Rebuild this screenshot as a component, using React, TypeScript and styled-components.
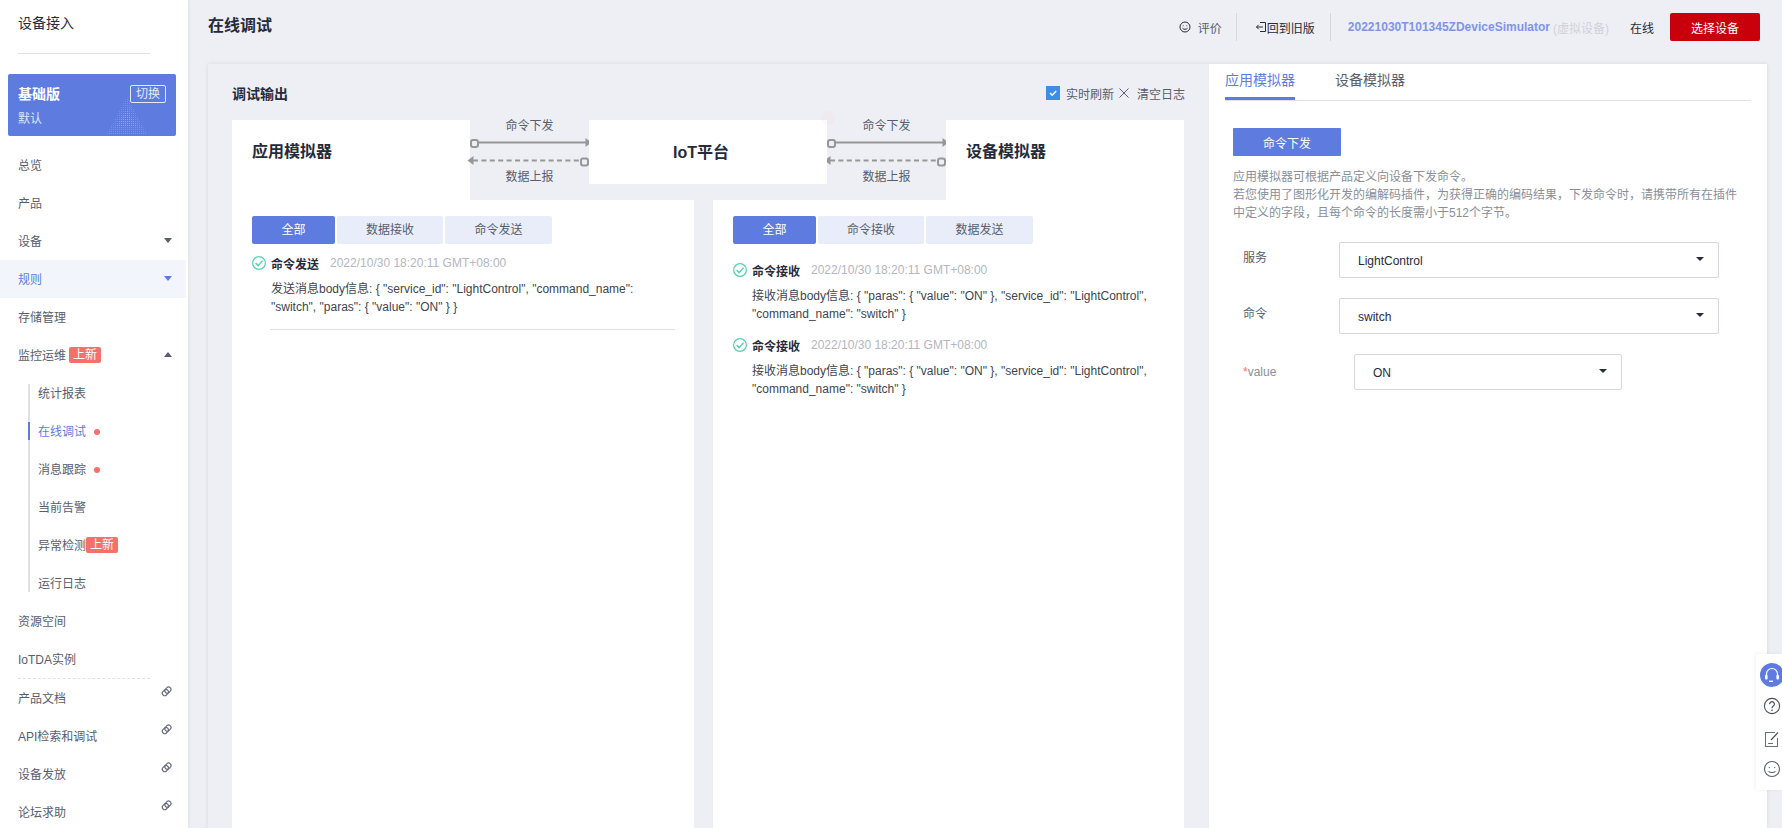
import React from "react";
import styled, { createGlobalStyle } from "styled-components";

const Global = createGlobalStyle`
  html, body { margin: 0; padding: 0; height: 100%; overflow: hidden; background: #eeeff5; }
  body { font-family: "Liberation Sans", "Noto Sans CJK SC", sans-serif; font-size: 12px; color: #252b3a; }
  * { box-sizing: border-box; }
`;

const Page = styled.div`
  position: relative;
  display: flex;
  width: 1782px;
  height: 828px;
  overflow: hidden;
  background: #eeeff5;
`;

/* ---------- sidebar ---------- */
const Sidebar = styled.aside`
  flex: 0 0 188px;
  height: 828px;
  overflow: hidden;
  background: #fff;
  box-shadow: 1px 0 3px rgba(0, 0, 0, 0.06);
`;
const SideTitle = styled.div`
  height: 46px;
  padding-left: 18px;
  line-height: 46px;
  font-size: 14px;
  color: #252b3a;
`;
const SideRule = styled.div`
  width: 132px;
  height: 1px;
  margin: 7px 0 20px 18px;
  background: #dfe1e6;
`;
const PlanCard = styled.div`
  position: relative;
  height: 62px;
  margin: 0 12px 10px 8px;
  padding: 11px 10px 0;
  border-radius: 2px;
  background: #5e7ce0;
  color: #fff;
  overflow: hidden;
`;
const PlanRow = styled.div`
  display: flex;
  align-items: center;
  justify-content: space-between;
  height: 18px;
`;
const PlanName = styled.span`
  margin-top: -2px;
  font-size: 14px;
  font-weight: 700;
`;
const PlanSwitch = styled.span`
  position: relative;
  z-index: 1;
  width: 36px;
  height: 18px;
  border: 1px solid #e3e8fa;
  border-radius: 2px;
  line-height: 17px;
  text-align: center;
  font-size: 12px;
  color: #e6eafb;
`;
const PlanSub = styled.div`
  margin-top: 7px;
  line-height: 18px;
  font-size: 12px;
  color: #dfe5f9;
`;
const PlanArt = styled.svg`
  position: absolute;
  left: 97px;
  top: 23px;
`;
const MenuItem = styled.div<{ $active?: boolean }>`
  display: flex;
  align-items: center;
  height: 38px;
  width: 186px;
  padding: 0 0 2px 18px;
  font-size: 12px;
  color: ${(p) => (p.$active ? "#5e7ce0" : "#575d6c")};
  background: ${(p) => (p.$active ? "#f2f5fc" : "transparent")};
`;
const Caret = styled.span<{ $up?: boolean; $color?: string }>`
  margin-left: auto;
  margin-right: 14px;
  width: 0;
  height: 0;
  border-left: 4px solid transparent;
  border-right: 4px solid transparent;
  ${(p) =>
    p.$up
      ? `border-bottom: 5px solid ${p.$color || "#575d6c"};`
      : `border-top: 5px solid ${p.$color || "#575d6c"};`}
`;
const NewBadge = styled.span<{ $flush?: boolean }>`
  width: 32px;
  height: 16px;
  margin: 2px 0 0 ${(p) => (p.$flush ? "0" : "3px")};
  border-radius: 2px;
  background: #f66f6a;
  color: #fff;
  text-align: center;
  line-height: 16px;
  font-size: 12px;
`;
const SubMenu = styled.div`
  position: relative;
  &::before {
    content: "";
    position: absolute;
    left: 28px;
    top: 10px;
    bottom: 10px;
    width: 2px;
    background: #dfe1e6;
  }
`;
const SubItem = styled.div<{ $active?: boolean }>`
  position: relative;
  display: flex;
  align-items: center;
  height: 38px;
  padding: 0 0 2px 38px;
  font-size: 12px;
  color: ${(p) => (p.$active ? "#5e7ce0" : "#575d6c")};
  ${(p) =>
    p.$active
      ? `&::before { content: ""; position: absolute; left: 28px; top: 10px; height: 18px; width: 2px; background: #5e7ce0; }`
      : ""}
`;
const Dot = styled.span`
  width: 6px;
  height: 6px;
  margin: 3px 0 0 8px;
  border-radius: 50%;
  background: #f66f6a;
`;
const DashRule = styled.div`
  width: 132px;
  margin: 0 0 0 18px;
  border-top: 1px dashed #dfe1e6;
  height: 0;
`;
const LinkIcon = styled.svg`
  margin-left: auto;
  margin-right: 14px;
  margin-top: -10px;
`;

/* ---------- main ---------- */
const Main = styled.main`
  flex: 1;
  min-width: 0;
  padding-left: 20px;
  display: flex;
  flex-direction: column;
`;
const TopBar = styled.header`
  flex: 0 0 64px;
  display: flex;
  align-items: flex-start;
  padding-right: 22px;
`;
const PageTitle = styled.h1`
  margin: 14px auto 0 0;
  font-size: 16px;
  line-height: 24px;
  font-weight: 700;
  color: #252b3a;
`;
const TopGroup = styled.div`
  display: flex;
  align-items: center;
  height: 28px;
  margin-top: 13px;
`;
const TopLink = styled.span`
  display: flex;
  align-items: center;
  font-size: 12px;
  color: #575d6c;
`;
const TopBack = styled(TopLink)`
  color: #252b3a;
`;
const Sep = styled.span<{ $l: number; $r: number }>`
  width: 1px;
  height: 28px;
  background: #d5d7de;
  margin: 0 ${(p) => p.$r}px 0 ${(p) => p.$l}px;
`;
const DeviceName = styled.span`
  font-weight: 700;
  font-size: 12px;
  color: #7f93ee;
`;
const DeviceKind = styled.span`
  margin-left: 3px;
  color: #d0d2d9;
`;
const OnlineText = styled.span`
  margin-left: 21px;
  color: #252b3a;
`;
const DangerButton = styled.button`
  width: 90px;
  height: 28px;
  margin-left: 16px;
  border: 0;
  border-radius: 2px;
  background: #c7000b;
  color: #fff;
  font: inherit;
  font-size: 12px;
`;
const Content = styled.div`
  flex: 1;
  display: flex;
  min-height: 0;
  margin-right: 15px;
  box-shadow: 0 0 4px rgba(0, 0, 0, 0.1);
`;
const DebugPanel = styled.section`
  flex: 0 0 1001px;
  padding: 0 24px;
  display: flex;
  flex-direction: column;
`;
const DebugHead = styled.div`
  flex: 0 0 56px;
  display: flex;
  align-items: center;
  padding-top: 2px;
  justify-content: space-between;
`;
const DebugTitle = styled.h2`
  margin: 0;
  font-size: 14px;
  font-weight: 700;
  color: #252b3a;
`;
const DebugTools = styled.div`
  display: flex;
  align-items: center;
  color: #575d6c;
`;
const CheckBox = styled.span`
  display: flex;
  align-items: center;
  justify-content: center;
  width: 14px;
  height: 14px;
  background: #3f8ee6;
  margin-right: 6px;
`;
const ClearIcon = styled.svg`
  margin: 0 8px 0 5px;
`;
const FlowRow = styled.div`
  flex: 0 0 80px;
  display: grid;
  grid-template-columns: 238px 119px 238px 119px 238px;
  align-items: start;
`;
const EndBox = styled.div`
  height: 80px;
  background: #fff;
  padding: 18px 0 0 20px;
  font-size: 16px;
  line-height: 28px;
  font-weight: 700;
  color: #252b3a;
`;
const CoreBox = styled.div`
  position: relative;
  height: 64px;
  padding-right: 14px;
  background: #fff;
  text-align: center;
  line-height: 66px;
  font-size: 16px;
  font-weight: 700;
  color: #252b3a;
`;
const GhostBadge = styled.span`
  position: absolute;
  right: -8px;
  top: -9px;
  width: 14px;
  height: 14px;
  border-radius: 50%;
  background: rgba(246, 111, 106, 0.03);
`;
const Gap = styled.div`
  display: flex;
  flex-direction: column;
  align-items: center;
  height: 80px;
`;
const GapLabel = styled.span`
  height: 12px;
  line-height: 12px;
  font-size: 12px;
  color: #575d6c;
`;
const GapArt = styled.svg`
  display: block;
  margin: 6px 0 1px;
  overflow: visible;
`;
const Cards = styled.div`
  flex: 1;
  display: flex;
  gap: 19px;
  min-height: 0;
`;
const Card = styled.div<{ $w: number }>`
  flex: 0 0 ${(p) => p.$w}px;
  background: #fff;
  padding: 16px 20px 0;
`;
const FilterTabs = styled.div`
  display: flex;
  gap: 2px;
`;
const FilterTab = styled.span<{ $on?: boolean; $w: number }>`
  width: ${(p) => p.$w}px;
  height: 28px;
  line-height: 28px;
  text-align: center;
  font-size: 12px;
  border-radius: 2px;
  color: ${(p) => (p.$on ? "#fff" : "#575d6c")};
  background: ${(p) => (p.$on ? "#5e7ce0" : "#e9edfa")};
`;
const LogList = styled.div<{ $top: number }>`
  margin-top: ${(p) => p.$top}px;
`;
const LogEntry = styled.div<{ $rule?: boolean }>`
  margin-bottom: ${(p) => (p.$rule ? "0" : "12px")};
  ${(p) => (p.$rule ? "border-bottom: 1px solid #dfe1e6; padding-bottom: 13px; margin-left: 18px; margin-right: -1px;" : "")}
`;
const LogHead = styled.div<{ $rule?: boolean }>`
  display: flex;
  align-items: center;
  height: 20px;
  ${(p) => (p.$rule ? "margin-left: -18px;" : "")}
`;
const LogType = styled.span`
  margin-left: 5px;
  font-weight: 700;
  font-size: 12px;
  color: #252b3a;
`;
const LogTime = styled.span`
  margin-left: 11px;
  color: #b3b6bf;
  font-size: 12px;
`;
const LogBody = styled.div<{ $rule?: boolean }>`
  margin: 7px 0 0 ${(p) => (p.$rule ? "1px" : "19px")};
  line-height: 18px;
  color: #40454f;
  font-size: 12px;
  width: 396px;
`;

/* ---------- right panel ---------- */
const SimPanel = styled.section`
  flex: 1;
  background: #fff;
  padding: 0 16px;
`;
const SimTabs = styled.div`
  display: flex;
  gap: 40px;
  height: 37px;
  border-bottom: 1px solid #dfe1e6;
`;
const SimTab = styled.span<{ $on?: boolean }>`
  height: 36px;
  padding-top: 5px;
  line-height: 22px;
  font-size: 14px;
  color: ${(p) => (p.$on ? "#5e7ce0" : "#575d6c")};
  border-bottom: ${(p) => (p.$on ? "3px solid #5e7ce0" : "0")};
`;
const SimBody = styled.div`
  padding: 27px 8px 0;
`;
const PrimaryButton = styled.button`
  display: block;
  width: 108px;
  height: 28px;
  border: 0;
  border-radius: 1px;
  background: #5e7ce0;
  color: #fff;
  font: inherit;
  font-size: 12px;
`;
const Hint = styled.p`
  margin: 12px 0 20px;
  width: 510px;
  line-height: 18px;
  font-size: 12px;
  color: #8a8e99;
`;
const FormRow = styled.div`
  display: flex;
  align-items: center;
  height: 36px;
  margin-bottom: 20px;
  padding-left: 10px;
`;
const FormLabel = styled.span<{ $w: number; $muted?: boolean }>`
  flex: 0 0 ${(p) => p.$w}px;
  margin-top: ${(p) => (p.$muted ? "0" : "-8px")};
  font-size: 12px;
  color: ${(p) => (p.$muted ? "#8a8e99" : "#575d6c")};
`;
const Req = styled.span`
  color: #f66f6a;
`;
const Select = styled.div<{ $w: number }>`
  display: flex;
  align-items: center;
  justify-content: space-between;
  width: ${(p) => p.$w}px;
  height: 36px;
  padding: 2px 14px 0 18px;
  border: 1px solid #d5d7de;
  border-radius: 2px;
  font-size: 12px;
  color: #252b3a;
`;
const SelectCaret = styled.span`
  width: 0;
  height: 0;
  margin-top: -5px;
  border-left: 4px solid transparent;
  border-right: 4px solid transparent;
  border-top: 4px solid #252b3a;
`;

/* ---------- floating helper ---------- */
const Floater = styled.div`
  position: absolute;
  right: 0;
  top: 654px;
  width: 26px;
  height: 136px;
  background: #fff;
  overflow: hidden;
  padding: 9px 0 0 4px;
  box-shadow: -1px 0 4px rgba(0, 0, 0, 0.06);
`;
const FloatIcon = styled.svg<{ $top?: number; $left?: number }>`
  display: block;
  margin: ${(p) => p.$top || 0}px 0 0 ${(p) => p.$left || 0}px;
`;

/* ---------- drawings ---------- */
const Check = () => (
  <svg width="14" height="14" viewBox="0 0 14 14" fill="none">
    <circle cx="7" cy="7" r="6.4" stroke="#50d4ab" strokeWidth="1.2" />
    <path d="M3.6 7l2.5 2.6 4.5-5" stroke="#50d4ab" strokeWidth="1.4" />
  </svg>
);

const Chain = () => (
  <LinkIcon width="12" height="12" viewBox="0 0 12 12" fill="none" stroke="#6a6f7c" strokeWidth="1.2">
    <rect x="-0.2" y="-2.4" width="6.6" height="4.8" rx="2.3" transform="translate(3.2 8.8) rotate(-45)" />
    <rect x="-3.4" y="-2.4" width="6.6" height="4.8" rx="2.3" transform="translate(8 4) rotate(-45)" />
  </LinkIcon>
);

const Arrows = () => (
  <GapArt width="119" height="32" viewBox="0 0 119 32" fill="none">
    <path d="M7 4.5H117" stroke="#979797" strokeWidth="2" />
    <path d="M115.5 0l6 4.5-6 4.5z" fill="#979797" />
    <rect x="1" y="2" width="7" height="7" rx="2" fill="#eeeff5" stroke="#979797" strokeWidth="2" />
    <path d="M3 22.5H112" stroke="#979797" strokeWidth="2" strokeDasharray="5 3.4" />
    <path d="M3.5 18l-6 4.5 6 4.5z" fill="#979797" />
    <rect x="111" y="20.5" width="7" height="7" rx="2" fill="#eeeff5" stroke="#979797" strokeWidth="2" />
  </GapArt>
);

const Dataflow = () => (
  <Gap>
    <GapLabel>命令下发</GapLabel>
    <Arrows />
    <GapLabel>数据上报</GapLabel>
  </Gap>
);

const body1 = '发送消息body信息: { "service_id": "LightControl", "command_name": "switch", "paras": { "value": "ON" } }';
const body2 = '接收消息body信息: { "paras": { "value": "ON" }, "service_id": "LightControl", "command_name": "switch" }';
const stamp = "2022/10/30 18:20:11 GMT+08:00";

export default function App() {
  return (
    <Page>
      <Global />
      <Sidebar>
        <SideTitle>设备接入</SideTitle>
        <SideRule />
        <PlanCard>
          <PlanRow>
            <PlanName>基础版</PlanName>
            <PlanSwitch>切换</PlanSwitch>
          </PlanRow>
          <PlanSub>默认</PlanSub>
          <PlanArt width="44" height="38" viewBox="0 0 44 38">
            <defs>
              <pattern id="plandots" width="2" height="2" patternUnits="userSpaceOnUse">
                <rect width="1" height="1" fill="rgba(255,255,255,0.16)" />
              </pattern>
            </defs>
            <polygon points="22,0 42,37 2,37" fill="url(#plandots)" />
            <polygon points="22,12 33,30 11,30" fill="url(#plandots)" />
          </PlanArt>
        </PlanCard>
        <MenuItem>总览</MenuItem>
        <MenuItem>产品</MenuItem>
        <MenuItem>设备<Caret /></MenuItem>
        <MenuItem $active>规则<Caret $color="#5e7ce0" /></MenuItem>
        <MenuItem>存储管理</MenuItem>
        <MenuItem>监控运维<NewBadge>上新</NewBadge>
          <Caret $up />
        </MenuItem>
        <SubMenu>
          <SubItem>统计报表</SubItem>
          <SubItem $active>在线调试<Dot /></SubItem>
          <SubItem>消息跟踪<Dot /></SubItem>
          <SubItem>当前告警</SubItem>
          <SubItem>异常检测<NewBadge $flush>上新</NewBadge></SubItem>
          <SubItem>运行日志</SubItem>
        </SubMenu>
        <MenuItem>资源空间</MenuItem>
        <MenuItem>IoTDA实例</MenuItem>
        <DashRule />
        <MenuItem>产品文档<Chain /></MenuItem>
        <MenuItem>API检索和调试<Chain /></MenuItem>
        <MenuItem>设备发放<Chain /></MenuItem>
        <MenuItem>论坛求助<Chain /></MenuItem>
      </Sidebar>

      <Main>
        <TopBar>
          <PageTitle>在线调试</PageTitle>
          <TopGroup>
            <TopLink>
              <svg width="12" height="12" viewBox="0 0 12 12" fill="none" stroke="#252b3a" style={{ marginRight: 7 }}>
                <circle cx="6" cy="6" r="5" />
                <circle cx="4.2" cy="4.8" r=".5" fill="#252b3a" stroke="none" />
                <circle cx="7.8" cy="4.8" r=".5" fill="#252b3a" stroke="none" />
                <path d="M3.5 7.3c1.3 1.3 3.7 1.3 5 0" />
              </svg>
              评价
            </TopLink>
            <Sep $l={14} $r={18} />
            <TopBack>
              <svg width="12" height="12" viewBox="0 0 12 12" fill="none" stroke="#252b3a">
                <path d="M5 1.5h5.5v9H5" />
                <path d="M8 6H1.5M3.7 3.8L1.5 6l2.2 2.2" />
              </svg>
              回到旧版
            </TopBack>
            <Sep $l={15} $r={17} />
            <DeviceName>20221030T101345ZDeviceSimulator</DeviceName>
            <DeviceKind>(虚拟设备)</DeviceKind>
            <OnlineText>在线</OnlineText>
            <DangerButton>选择设备</DangerButton>
          </TopGroup>
        </TopBar>

        <Content>
          <DebugPanel>
            <DebugHead>
              <DebugTitle>调试输出</DebugTitle>
              <DebugTools>
                <CheckBox>
                  <svg width="10" height="10" viewBox="0 0 10 10" fill="none" stroke="#fff" strokeWidth="1.4">
                    <path d="M2 5l2.2 2.2L8.2 3" />
                  </svg>
                </CheckBox>
                实时刷新
                <ClearIcon width="10" height="10" viewBox="0 0 10 10" stroke="#575d6c" strokeWidth="1">
                  <path d="M.5.5l9 9M9.5.5l-9 9" />
                </ClearIcon>
                清空日志
              </DebugTools>
            </DebugHead>
            <FlowRow>
              <EndBox>应用模拟器</EndBox>
              <Dataflow />
              <CoreBox>IoT平台<GhostBadge /></CoreBox>
              <Dataflow />
              <EndBox>设备模拟器</EndBox>
            </FlowRow>
            <Cards>
              <Card $w={462}>
                <FilterTabs>
                  <FilterTab $on $w={83}>全部</FilterTab>
                  <FilterTab $w={106}>数据接收</FilterTab>
                  <FilterTab $w={107}>命令发送</FilterTab>
                </FilterTabs>
                <LogList $top={9}>
                  <LogEntry $rule>
                    <LogHead $rule>
                      <Check />
                      <LogType>命令发送</LogType>
                      <LogTime>{stamp}</LogTime>
                    </LogHead>
                    <LogBody $rule>{body1}</LogBody>
                  </LogEntry>
                </LogList>
              </Card>
              <Card $w={471}>
                <FilterTabs>
                  <FilterTab $on $w={83}>全部</FilterTab>
                  <FilterTab $w={106}>命令接收</FilterTab>
                  <FilterTab $w={107}>数据发送</FilterTab>
                </FilterTabs>
                <LogList $top={16}>
                  <LogEntry>
                    <LogHead>
                      <Check />
                      <LogType>命令接收</LogType>
                      <LogTime>{stamp}</LogTime>
                    </LogHead>
                    <LogBody>{body2}</LogBody>
                  </LogEntry>
                  <LogEntry>
                    <LogHead>
                      <Check />
                      <LogType>命令接收</LogType>
                      <LogTime>{stamp}</LogTime>
                    </LogHead>
                    <LogBody>{body2}</LogBody>
                  </LogEntry>
                </LogList>
              </Card>
            </Cards>
          </DebugPanel>

          <SimPanel>
            <SimTabs>
              <SimTab $on>应用模拟器</SimTab>
              <SimTab>设备模拟器</SimTab>
            </SimTabs>
            <SimBody>
              <PrimaryButton>命令下发</PrimaryButton>
              <Hint>
                应用模拟器可根据产品定义向设备下发命令。
                <br />
                若您使用了图形化开发的编解码插件，为获得正确的编码结果，下发命令时，请携带所有在插件中定义的字段，且每个命令的长度需小于512个字节。
              </Hint>
              <FormRow>
                <FormLabel $w={96}>服务</FormLabel>
                <Select $w={380}>LightControl<SelectCaret /></Select>
              </FormRow>
              <FormRow>
                <FormLabel $w={96}>命令</FormLabel>
                <Select $w={380}>switch<SelectCaret /></Select>
              </FormRow>
              <FormRow>
                <FormLabel $w={111} $muted><Req>*</Req>value</FormLabel>
                <Select $w={268}>ON<SelectCaret /></Select>
              </FormRow>
            </SimBody>
          </SimPanel>
        </Content>
      </Main>

      <Floater>
        <FloatIcon width="24" height="24" viewBox="0 0 24 24" fill="none">
          <circle cx="12" cy="12" r="12" fill="#5e7ce0" />
          <path d="M6.5 13v-2a5.5 5.5 0 0111 0v2" stroke="#fff" strokeWidth="1.2" />
          <rect x="5" y="12" width="2.6" height="4.5" rx="1" fill="#fff" />
          <rect x="16.4" y="12" width="2.6" height="4.5" rx="1" fill="#fff" />
          <path d="M9 18.3h4" stroke="#fff" strokeWidth="1.4" />
        </FloatIcon>
        <FloatIcon $top={10} $left={3} width="18" height="18" viewBox="0 0 18 18" fill="none" stroke="#4a4f5c">
          <circle cx="9" cy="9" r="7.6" strokeWidth="1.1" />
          <path d="M6.6 7.2a2.4 2.4 0 114 1.7c-.9.7-1.6 1.1-1.6 2.3" strokeWidth="1.2" />
          <circle cx="9" cy="13.3" r=".8" fill="#4a4f5c" stroke="none" />
        </FloatIcon>
        <FloatIcon $top={15} $left={3} width="18" height="18" viewBox="0 0 18 18" fill="none" stroke="#6a6f7c" strokeWidth="1.1">
          <path d="M12 2.5H2.5v14h12V8" />
          <path d="M8 10l7-7.5" stroke="#4a4f5c" />
          <path d="M5 13.5h5" />
        </FloatIcon>
        <FloatIcon $top={12} $left={3} width="18" height="18" viewBox="0 0 18 18" fill="none" stroke="#5a5f6c" strokeWidth="1.1">
          <circle cx="9" cy="9" r="7.5" />
          <circle cx="6.3" cy="7.6" r=".7" fill="#5a5f6c" stroke="none" />
          <circle cx="11.7" cy="7.6" r=".7" fill="#5a5f6c" stroke="none" />
          <path d="M5.5 11.3c1.8 1.5 5.2 1.5 7 0" />
        </FloatIcon>
      </Floater>
    </Page>
  );
}
